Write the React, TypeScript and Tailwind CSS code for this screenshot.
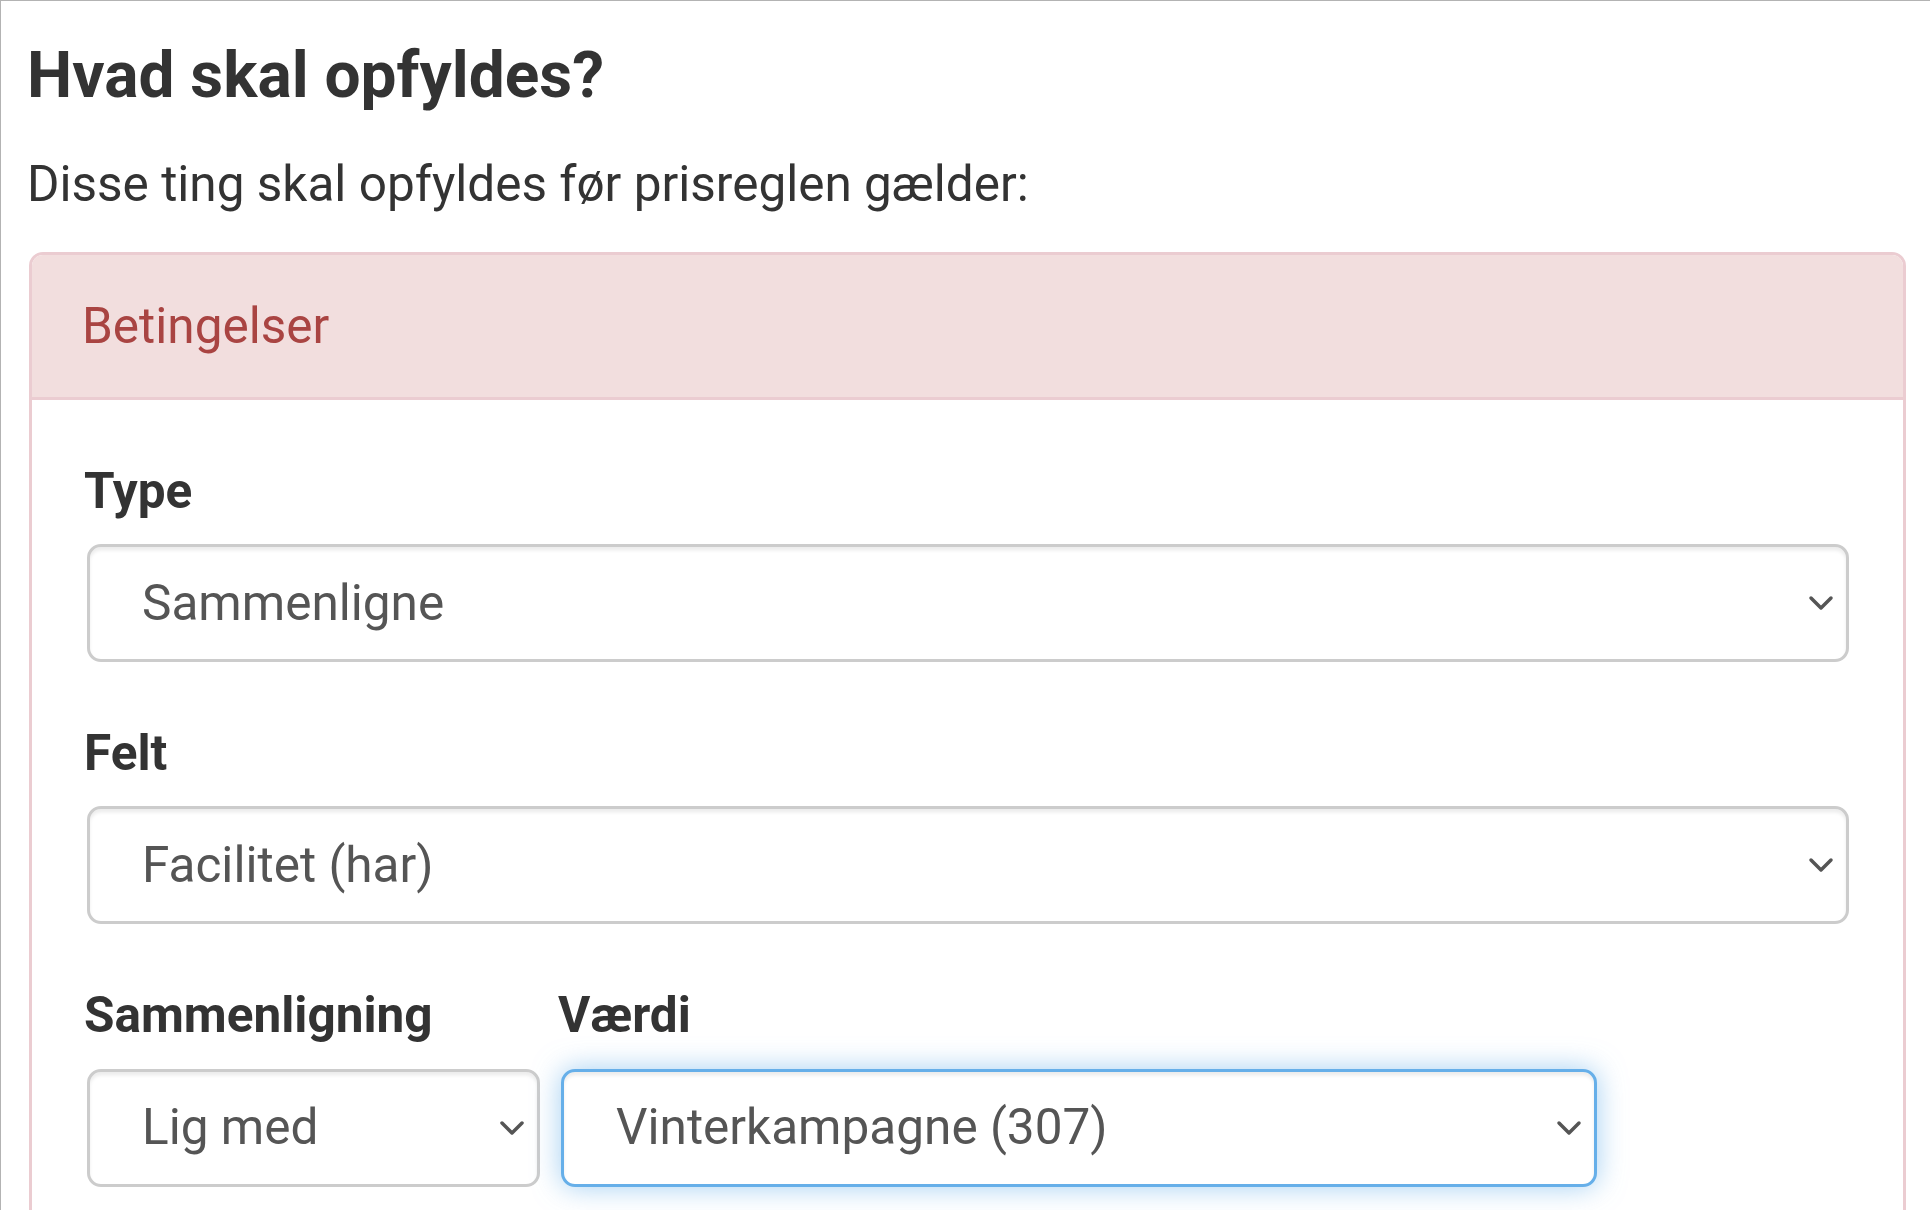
import React from "react";

function Chevron() {
  return (
    <svg width="26" height="16" viewBox="0 0 26 16" fill="none" className="shrink-0">
      <path d="M3 3l10 10L23 3" stroke="#555555" strokeWidth="3.5" strokeLinecap="round" strokeLinejoin="round" />
    </svg>
  );
}

function FakeSelect({ value, focused = false }: { value: string; focused?: boolean }) {
  return (
    <div
      className={`flex h-[118px] w-full items-center justify-between rounded-[14px] border-[3.5px] bg-white pl-[52px] pr-[12px] text-[49.5px] text-[#555555] ${
        focused
          ? "border-[#66afe9] shadow-[inset_0_3.5px_3.5px_rgba(0,0,0,0.075),0_0_28px_rgba(102,175,233,0.6)]"
          : "border-[#cccccc] shadow-[inset_0_3.5px_3.5px_rgba(0,0,0,0.075)]"
      }`}
    >
      <span className="truncate">{value}</span>
      <Chevron />
    </div>
  );
}

function Field({ label, children }: { label: string; children: React.ReactNode }) {
  return (
    <div>
      <div className="-ml-[3px] mb-[17.5px] text-[49.5px] font-bold leading-[70.7px] text-[#333333]">{label}</div>
      {children}
    </div>
  );
}

export default function App() {
  return (
    <div className="min-h-screen overflow-hidden border-l border-t border-[#b3b3b3] bg-white pl-[28px] font-['Roboto',sans-serif] text-[#333333]">
      {/* Heading */}
      <h4 className="-ml-[2px] mt-[40px] text-[64px] font-bold leading-[70.4px] text-[#333333]">Hvad skal opfyldes?</h4>
      <p className="-ml-[2px] mt-[37.6px] text-[49.5px] leading-[70.7px]">Disse ting skal opfyldes før prisreglen gælder:</p>

      {/* Conditions panel */}
      <div className="mt-[32.3px] w-[1877px] rounded-t-[14px] border-[3px] border-b-0 border-[#ebccd1] bg-white">
        <div className="flex h-[145px] items-center rounded-t-[11px] border-b-[3px] border-[#ebccd1] bg-[#f2dede] pl-[50px]">
          <span className="text-[49.5px] text-[#a94442]">Betingelser</span>
        </div>

        <div className="flex flex-col gap-[56px] px-[55px] pb-[80px] pt-[56px]">
          <div className="w-[1762px]">
            <Field label="Type">
              <FakeSelect value="Sammenligne" />
            </Field>
          </div>
          <div className="w-[1762px]">
            <Field label="Felt">
              <FakeSelect value="Facilitet (har)" />
            </Field>
          </div>
          <div className="flex gap-[21px]">
            <div className="w-[453px]">
              <Field label="Sammenligning">
                <FakeSelect value="Lig med" />
              </Field>
            </div>
            <div className="w-[1036px]">
              <Field label="Værdi">
                <FakeSelect value="Vinterkampagne (307)" focused />
              </Field>
            </div>
          </div>
        </div>
      </div>
    </div>
  );
}
